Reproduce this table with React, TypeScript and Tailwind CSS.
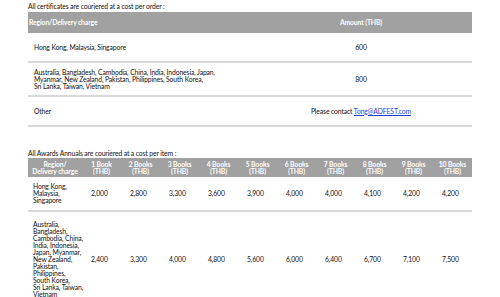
const books = ["1 Book", "2 Books", "3 Books", "4 Books", "5 Books", "6 Books", "7 Books", "8 Books", "9 Books", "10 Books"];

const annualRows = [
  {
    region: ["Hong Kong,", "Malaysia,", "Singapore"],
    prices: ["2,000", "2,800", "3,300", "3,600", "3,900", "4,000", "4,000", "4,100", "4,200", "4,200"],
    h: "h-[35px]",
  },
  {
    region: [
      "Australia,",
      "Bangladesh,",
      "Cambodia, China,",
      "India, Indonesia,",
      "Japan, Myanmar,",
      "New Zealand,",
      "Pakistan,",
      "Philippines,",
      "South Korea,",
      "Sri Lanka, Taiwan,",
      "Vietnam",
    ],
    prices: ["2,400", "3,300", "4,000", "4,800", "5,600", "6,000", "6,400", "6,700", "7,100", "7,500"],
    h: "h-[97px]",
  },
];

export default function App() {
  return (
    <div className="w-[500px] h-[297px] overflow-hidden bg-white pl-[28px] pt-[1px] font-['Lato',sans-serif] text-[6.8px] tracking-[-0.12px] leading-[7px] text-[#111]">
      <div className="w-[444px]">
        <p className="h-[11px] flex items-center">All certificates are couriered at a cost per order :</p>

        <div className="grid grid-cols-2 h-[21px] bg-[#a1a1a1] text-white font-bold items-center">
          <div className="pl-[1px]">Region/Delivery charge</div>
          <div className="text-center">Amount (THB)</div>
        </div>
        <div className="grid grid-cols-2 h-[30px] items-center border-b-2 border-[#d8d8d8]">
          <div className="pl-[6px]">Hong Kong, Malaysia, Singapore</div>
          <div className="text-center">600</div>
        </div>
        <div className="grid grid-cols-2 h-[34px] items-center border-b-2 border-[#d8d8d8]">
          <div className="pl-[6px] whitespace-nowrap">
            Australia, Bangladesh, Cambodia, China, India, Indonesia, Japan,
            <br />
            Myanmar, New Zealand, Pakistan, Philippines, South Korea,
            <br />
            Sri Lanka, Taiwan, Vietnam
          </div>
          <div className="text-center">800</div>
        </div>
        <div className="grid grid-cols-2 h-[30px] items-center border-b-2 border-[#d8d8d8]">
          <div className="pl-[6px]">Other</div>
          <div className="text-center">
            Please contact <span className="text-[#1f3fd6] underline">Tong@ADFEST.com</span>
          </div>
        </div>

        <p className="mt-[22px] h-[9px] flex items-center">All Awards Annuals are couriered at a cost per item :</p>

        <div className="grid grid-cols-[54px_repeat(10,39px)] h-[19px] bg-[#a1a1a1] text-white font-bold items-center text-center">
          <div className="whitespace-nowrap">
            Region/
            <br />
            Delivery charge
          </div>
          {books.map((b) => (
            <div key={b} className="whitespace-nowrap">
              {b}
              <br />
              (THB)
            </div>
          ))}
        </div>
        {annualRows.map((row, i) => (
          <div
            key={i}
            className={`grid grid-cols-[54px_repeat(10,39px)] items-center border-b-2 border-[#d8d8d8] ${row.h}`}
          >
            <div className="pl-[5px]">
              {row.region.map((l) => (
                <div key={l} className="whitespace-nowrap">
                  {l}
                </div>
              ))}
            </div>
            {row.prices.map((p, j) => (
              <div key={j} className="pl-[9px]">
                {p}
              </div>
            ))}
          </div>
        ))}
      </div>
    </div>
  );
}
